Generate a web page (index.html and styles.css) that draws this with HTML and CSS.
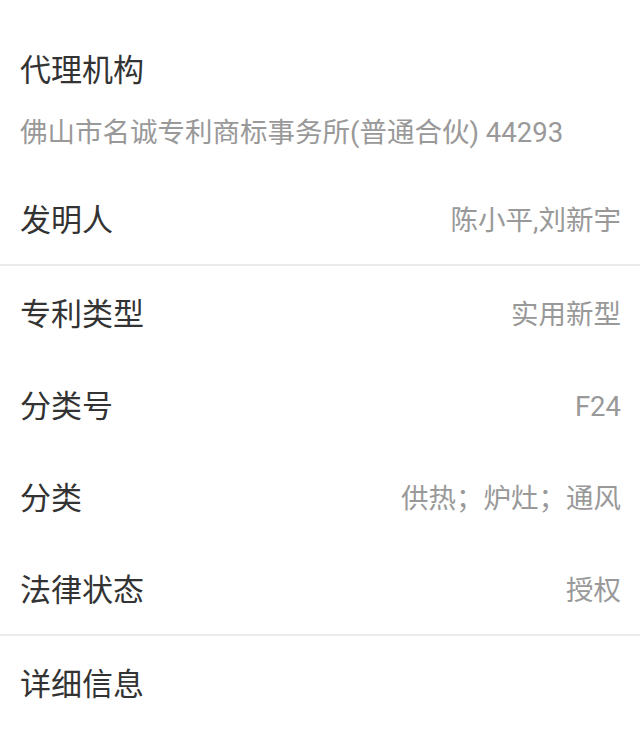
FILE: index.html
```html
<!DOCTYPE html>
<html lang="zh-CN">

<head>
    <meta charset="UTF-8">
    <meta name="viewport" content="width=device-width, initial-scale=1.0">
    <title>专利详情</title>
    <link rel="stylesheet" href="styles.css">
</head>

<body>
    <div class="agency">
        <div class="label">代理机构</div>
        <div class="agency-name">佛山市名诚专利商标事务所(普通合伙) 44293</div>
    </div>

    <div class="row">
        <span class="label">发明人</span>
        <span class="value">陈小平,刘新宇</span>
    </div>

    <div class="divider"></div>

    <div class="row">
        <span class="label">专利类型</span>
        <span class="value">实用新型</span>
    </div>
    <div class="row">
        <span class="label">分类号</span>
        <span class="value">F24</span>
    </div>
    <div class="row">
        <span class="label">分类</span>
        <span class="value">供热；炉灶；通风</span>
    </div>
    <div class="row">
        <span class="label">法律状态</span>
        <span class="value">授权</span>
    </div>

    <div class="divider"></div>

    <div class="row">
        <span class="label">详细信息</span>
    </div>
</body>

</html>
```

FILE: styles.css
```css
body {
    font-family: 'Roboto', 'Noto Sans CJK SC', sans-serif;
    background-color: #fff;
    margin: 0;
    padding: 0;
}

.label {
    font-size: 31px;
    line-height: 40px;
    color: #333;
}

.value,
.agency-name {
    font-size: 27.5px;
    line-height: 40px;
    color: #999;
}

.agency {
    height: 172px;
    box-sizing: border-box;
    padding: 51px 20px 0;
}

.agency-name {
    margin-top: 22px;
}

.row {
    height: 92px;
    box-sizing: border-box;
    padding: 5px 19px 0 20px;
    display: flex;
    justify-content: space-between;
    align-items: center;
}

.divider {
    height: 2px;
    background-color: #ebebeb;
}
```
